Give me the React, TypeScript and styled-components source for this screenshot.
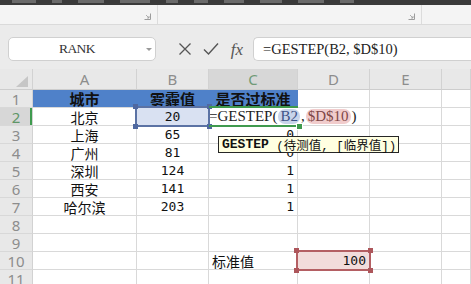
import React from 'react';
import styled, { createGlobalStyle } from 'styled-components';

const GREEN = '#3f9a4e';

const GlobalStyle = createGlobalStyle`
	html,
	body {
		margin: 0;
		padding: 0;
		background: #ffffff;
	}
	body {
		width: 471px;
		height: 284px;
		overflow: hidden;
		font-family: 'Noto Sans CJK SC', 'Liberation Sans', sans-serif;
	}
`;

type Align = 'left' | 'center' | 'right';

const columns = ['A', 'B', 'C', 'D', 'E', ''];

const rows: string[][] = [
	['城市', '雾霾值', '是否过标准', '', '', ''],
	['北京', '20', '', '', '', ''],
	['上海', '65', '0', '', '', ''],
	['广州', '81', '0', '', '', ''],
	['深圳', '124', '1', '', '', ''],
	['西安', '141', '1', '', '', ''],
	['哈尔滨', '203', '1', '', '', ''],
	['', '', '', '', '', ''],
	['', '', '', '', '', ''],
	['', '', '标准值', '100', '', ''],
	['', '', '', '', '', ''],
];

const alignFor = (row: number, col: number): Align => {
	if (row === 10 && col === 2) return 'left';
	if (col === 2 || col === 3) return row === 1 ? 'center' : 'right';
	return 'center';
};

const Launcher = () => (
	<svg width="7" height="7" viewBox="0 0 7 7">
		<path d="M0.5 6.5H6.5V0.5" fill="none" stroke="#9c9c9c" strokeWidth="1" />
		<path d="M2 2L5 5M5 3V5H3" fill="none" stroke="#9c9c9c" strokeWidth="0.8" />
	</svg>
);

const App: React.FC = () => {
	const renderCell = (r: number, c: number) => {
		const text = rows[r - 1][c];
		const isNum = /^[0-9]+$/.test(text);
		const key = `${r}-${c}`;

		if (r === 1 && c < 3) {
			return (
				<Cell key={key} $align="center" $fill="#4f81c9" $line="#4f81c9" $bold>
					{text}
				</Cell>
			);
		}

		if (r === 2 && c === 1) {
			return (
				<Cell key={key} $align="center" $fill="#d9e1f2" $num>
					{text}
					<SelFrame $color="#5b72a4">
						<Handle $color="#4f68a0" $x="l" $y="t" />
						<Handle $color="#4f68a0" $x="r" $y="t" />
						<Handle $color="#4f68a0" $x="l" $y="b" />
						<Handle $color="#4f68a0" $x="r" $y="b" />
					</SelFrame>
				</Cell>
			);
		}

		if (r === 2 && c === 2) {
			return (
				<Cell key={key} $align="left">
					<EditText>
						=GESTEP(<RefMark $tone="blue">B2</RefMark>,<RefMark $tone="red">$D$10</RefMark>)
					</EditText>
					<ActiveFrame>
						<FillHandle />
					</ActiveFrame>
					<Tip>
						<TipName>GESTEP</TipName>
						<TipArgs> (待测值, [临界值])</TipArgs>
					</Tip>
				</Cell>
			);
		}

		if (r === 10 && c === 3) {
			return (
				<Cell key={key} $align="right" $fill="#f2dcdb" $num>
					{text}
					<SelFrame $color="#b45f63">
						<Handle $color="#ad565b" $x="l" $y="t" />
						<Handle $color="#ad565b" $x="r" $y="t" />
						<Handle $color="#ad565b" $x="l" $y="b" />
						<Handle $color="#ad565b" $x="r" $y="b" />
					</SelFrame>
				</Cell>
			);
		}

		return (
			<Cell key={key} $align={alignFor(r, c)} $num={isNum}>
				{text}
			</Cell>
		);
	};

	return (
		<>
			<GlobalStyle />
			<Window>
				<TopStrip>
					<StripMark $w={24} />
					<StripMark $w={10} />
					<StripMark $w={26} />
					<StripMark $w={30} />
					<StripMark $w={12} />
					<StripMark $w={14} />
					<StripMark $w={20} />
					<StripMark $w={22} />
					<StripMark $w={26} />
					<StripMark $w={14} />
				</TopStrip>
				<Ribbon>
					<RibbonGroup $w={158}>
						<Launcher />
					</RibbonGroup>
					<RibbonGroup $w={264}>
						<Launcher />
					</RibbonGroup>
					<RibbonGroup $last />
				</Ribbon>
				<FormulaBar>
					<NameBox>
						RANK
						<DropArrow />
					</NameBox>
					<FxTools>
						<ToolSlot>
							<svg width="14" height="14" viewBox="0 0 14 14">
								<path d="M1.5 1.5L12.5 12.5M12.5 1.5L1.5 12.5" stroke="#555" strokeWidth="1.3" />
							</svg>
						</ToolSlot>
						<ToolSlot>
							<svg width="16" height="14" viewBox="0 0 16 14">
								<path d="M1 7.5L5.5 12L15 1.5" fill="none" stroke="#555" strokeWidth="1.4" />
							</svg>
						</ToolSlot>
						<ToolSlot>
							<FxLabel>fx</FxLabel>
						</ToolSlot>
					</FxTools>
					<FormulaInput>=GESTEP(B2, $D$10)</FormulaInput>
				</FormulaBar>
				<Sheet>
					<Corner>
						<svg width="12" height="11" viewBox="0 0 12 11">
							<path d="M12 0V11H0Z" fill="#c6c6c6" />
						</svg>
					</Corner>
					{columns.map((col) => (
						<ColHead key={col || 'F'} $active={col === 'C'}>
							{col}
						</ColHead>
					))}
					{rows.map((_, i) => {
						const r = i + 1;
						return (
							<React.Fragment key={r}>
								<RowHead $active={r === 2}>{r}</RowHead>
								{columns.map((__, c) => renderCell(r, c))}
							</React.Fragment>
						);
					})}
				</Sheet>
			</Window>
		</>
	);
};

const Window = styled.div`
	width: 471px;
	height: 284px;
	overflow: hidden;
	display: flex;
	flex-direction: column;
	background: #ffffff;
`;

const TopStrip = styled.div`
	height: 5px;
	flex: none;
	background: #3a3a3a;
	display: flex;
	gap: 16px;
	padding-left: 12px;
	overflow: hidden;
`;

const StripMark = styled.span<{ $w: number }>`
	width: ${(p) => p.$w}px;
	height: 3px;
	background: #6a6a6a;
	flex: none;
`;

const Ribbon = styled.div`
	height: 19px;
	flex: none;
	display: flex;
	background: #f4f4f4;
	border-bottom: 1px solid #dadada;
`;

const RibbonGroup = styled.div<{ $w?: number; $last?: boolean }>`
	box-sizing: border-box;
	width: ${(p) => (p.$w ? `${p.$w}px` : 'auto')};
	flex: ${(p) => (p.$w ? 'none' : 1)};
	border-right: ${(p) => (p.$last ? 'none' : '1px solid #dcdcdc')};
	display: flex;
	justify-content: flex-end;
	align-items: flex-end;
	padding: 0 6px 4px 0;
`;

const FormulaBar = styled.div`
	height: 44px;
	flex: none;
	box-sizing: border-box;
	display: flex;
	align-items: flex-start;
	padding: 12px 0 0 8px;
	background: #ebebeb;
`;

const NameBox = styled.div`
	position: relative;
	width: 148px;
	height: 24px;
	box-sizing: border-box;
	flex: none;
	display: flex;
	align-items: center;
	justify-content: center;
	padding-right: 10px;
	background: #ffffff;
	border: 1px solid #d0d0d0;
	border-radius: 5px;
	font-family: 'Liberation Serif', serif;
	font-size: 13.5px;
	letter-spacing: -0.6px;
	color: #333;
`;

const DropArrow = styled.span`
	position: absolute;
	right: 3px;
	top: 10px;
	width: 0;
	height: 0;
	border-left: 3px solid transparent;
	border-right: 3px solid transparent;
	border-top: 3px solid #999;
`;

const FxTools = styled.div`
	width: 97px;
	height: 24px;
	flex: none;
	box-sizing: border-box;
	display: flex;
	align-items: center;
	padding-left: 16px;
`;

const ToolSlot = styled.div`
	width: 26px;
	height: 24px;
	display: flex;
	align-items: center;
	justify-content: center;
`;

const FxLabel = styled.span`
	font-family: 'Liberation Serif', serif;
	font-style: italic;
	font-size: 17px;
	color: #555;
	line-height: 1;
`;

const FormulaInput = styled.div`
	flex: 1;
	height: 24px;
	box-sizing: border-box;
	display: flex;
	align-items: center;
	padding-left: 9px;
	background: #ffffff;
	border: 1px solid #d0d0d0;
	border-right: none;
	border-radius: 5px 0 0 5px;
	font-family: 'Liberation Serif', serif;
	font-size: 14.5px;
	color: #222;
	white-space: nowrap;
`;

const Sheet = styled.div`
	display: grid;
	grid-template-columns: 33px 104px 72px 89px 72px 72px 1fr;
	grid-template-rows: 21px repeat(11, 18px);
	flex: none;
`;

const HeadBase = styled.div`
	box-sizing: border-box;
	display: flex;
	align-items: center;
	justify-content: center;
	background: #e8e8e8;
	border-right: 1px solid #d2d2d2;
	border-bottom: 1px solid #cdcdcd;
	font-family: 'Noto Sans', 'Liberation Sans', sans-serif;
	font-size: 15px;
	color: #8d8d8d;
`;

const Corner = styled(HeadBase)`
	align-items: flex-end;
	justify-content: flex-end;
	padding: 0 4px 2px 0;
`;

const ColHead = styled(HeadBase)<{ $active?: boolean }>`
	background: ${(p) => (p.$active ? '#d7d7d7' : '#e8e8e8')};
	color: ${(p) => (p.$active ? '#6f9a76' : '#8d8d8d')};
`;

const RowHead = styled(HeadBase)<{ $active?: boolean }>`
	background: ${(p) => (p.$active ? '#d7d7d7' : '#e8e8e8')};
	color: ${(p) => (p.$active ? '#5f9668' : '#8d8d8d')};
	border-bottom-color: #d8d8d8;
	box-shadow: ${(p) => (p.$active ? `inset -2px 0 0 ${GREEN}` : 'none')};
`;

const Cell = styled.div<{
	$align: Align;
	$fill?: string;
	$line?: string;
	$bold?: boolean;
	$num?: boolean;
}>`
	position: relative;
	box-sizing: border-box;
	display: flex;
	align-items: center;
	justify-content: ${(p) =>
		p.$align === 'left' ? 'flex-start' : p.$align === 'right' ? 'flex-end' : 'center'};
	padding: 0 3px;
	background: ${(p) => p.$fill ?? 'transparent'};
	border-right: 1px solid ${(p) => p.$line ?? '#d9d9d9'};
	border-bottom: 1px solid #d9d9d9;
	font-family: ${(p) =>
		p.$num ? "'DejaVu Sans Mono', monospace" : "'Noto Sans CJK SC', 'Liberation Sans', sans-serif"};
	font-size: ${(p) => (p.$num ? '13px' : p.$bold ? '15px' : '14px')};
	font-weight: ${(p) => (p.$bold ? 700 : 400)};
	color: #111;
	white-space: nowrap;
`;

const SelFrame = styled.div<{ $color: string }>`
	position: absolute;
	top: -2px;
	left: -2px;
	right: -2px;
	bottom: -2px;
	border: 2px solid ${(p) => p.$color};
	pointer-events: none;
	z-index: 2;
`;

const Handle = styled.span<{ $color: string; $x: 'l' | 'r'; $y: 't' | 'b' }>`
	position: absolute;
	width: 5px;
	height: 5px;
	background: ${(p) => p.$color};
	${(p) => (p.$x === 'l' ? 'left: -4px;' : 'right: -4px;')}
	${(p) => (p.$y === 't' ? 'top: -4px;' : 'bottom: -4px;')}
`;

const EditText = styled.span`
	position: relative;
	z-index: 1;
	flex: none;
	margin-left: -3px;
	padding-right: 4px;
	height: 17px;
	display: flex;
	align-items: center;
	background: #ffffff;
	font-family: 'Liberation Serif', serif;
	font-size: 15px;
	color: #222;
`;

const RefMark = styled.span<{ $tone: 'blue' | 'red' }>`
	padding: 0 2px;
	margin: 0 1px;
	border-radius: 7px;
	background: ${(p) => (p.$tone === 'blue' ? '#c8d4ea' : '#f1cccc')};
	color: ${(p) => (p.$tone === 'blue' ? '#3d5287' : '#7e4646')};
	line-height: 15px;
`;

const ActiveFrame = styled.div`
	position: absolute;
	top: -2px;
	left: 0;
	right: -1px;
	bottom: -2px;
	border-top: 2px solid ${GREEN};
	border-bottom: 2px solid ${GREEN};
	pointer-events: none;
	z-index: 2;
`;

const FillHandle = styled.span`
	position: absolute;
	right: -4px;
	bottom: -4px;
	width: 5px;
	height: 5px;
	background: ${GREEN};
	border: 1px solid #ffffff;
	box-sizing: content-box;
	margin: -1px;
`;

const Tip = styled.div`
	position: absolute;
	left: 9px;
	top: 28px;
	z-index: 3;
	height: 17px;
	box-sizing: border-box;
	display: flex;
	align-items: center;
	padding: 0 2px 0 3px;
	background: #ffffe1;
	border: 1px solid #262626;
	white-space: nowrap;
	color: #111;
`;

const TipName = styled.span`
	font-family: 'Liberation Mono', monospace;
	font-weight: 700;
	font-size: 13px;
`;

const TipArgs = styled.span`
	font-family: 'Liberation Mono', 'Noto Sans CJK SC', monospace;
	font-size: 12.5px;
	white-space: pre;
`;

export default App;
